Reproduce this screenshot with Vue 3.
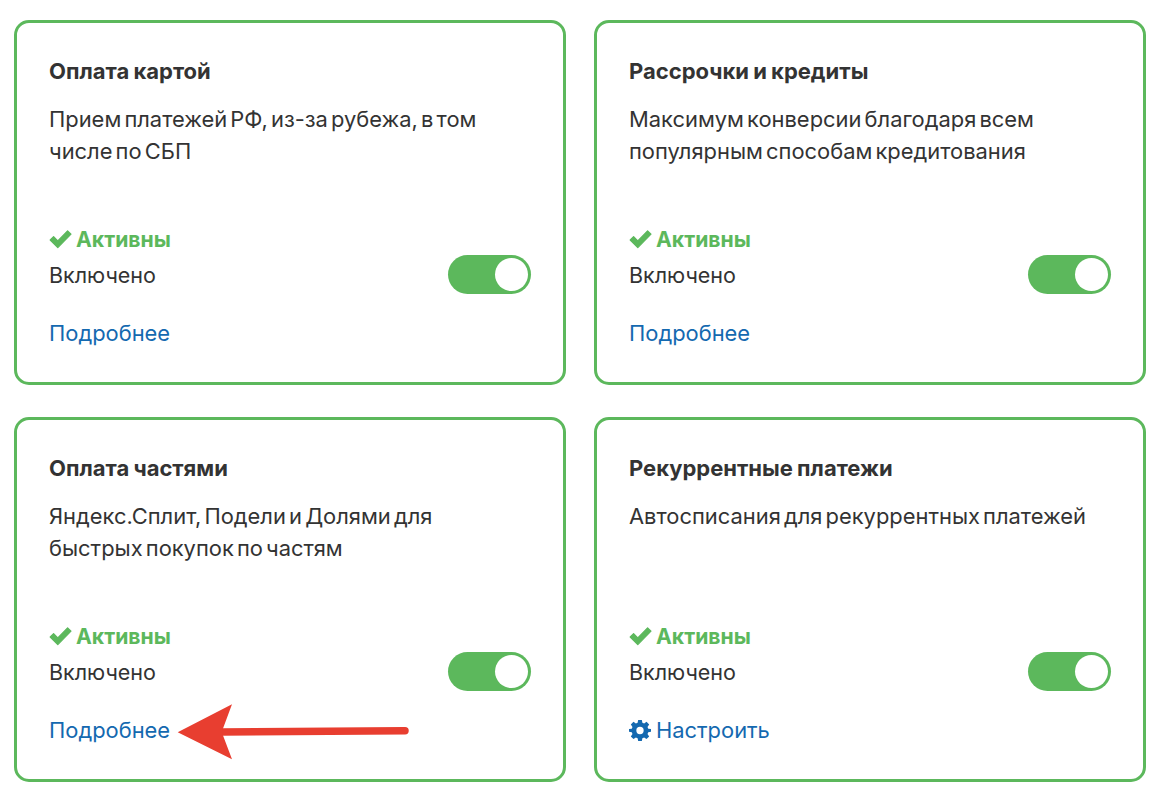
<script setup>
const cards = [
  { title: 'Оплата картой', lines: ['Прием платежей РФ, из-за рубежа, в том', 'числе по СБП'], link: 'Подробнее' },
  { title: 'Рассрочки и кредиты', lines: ['Максимум конверсии благодаря всем', 'популярным способам кредитования'], link: 'Подробнее' },
  { title: 'Оплата частями', lines: ['Яндекс.Сплит, Подели и Долями для', 'быстрых покупок по частям'], link: 'Подробнее', arrow: true },
  { title: 'Рекуррентные платежи', lines: ['Автосписания для рекуррентных платежей'], link: 'Настроить', gear: true },
]
</script>

<template>
  <div class="page">
    <section v-for="c in cards" :key="c.title" class="card">
      <h3 class="title">{{ c.title }}</h3>
      <p class="desc"><span v-for="l in c.lines" :key="l" class="line">{{ l }}</span></p>
      <div class="status">
        <svg class="check" viewBox="0 0 23 20" width="23" height="20"><path d="M1.200 11 4.600 7.600 8.800 11.800 18.600 1.800 22 5.200 8.800 18.600z" fill="#5cb85c" stroke="#5cb85c" stroke-width="1.200" stroke-linejoin="round"/></svg>
        <span>Активны</span>
      </div>
      <div class="row">
        <span class="label">Включено</span>
        <span class="toggle"><span class="knob"></span></span>
      </div>
      <a class="link">
        <svg v-if="c.gear" class="gear" viewBox="0 0 24 24" width="22" height="22"><path fill="#1469b0" fill-rule="evenodd" d="M10 1h4l.6 3.100 1.900.8L19.100 3.100 22 6l-1.800 2.600.8 1.900L24 11v3l-3 .5-.8 1.900 1.800 2.600-2.900 2.900-2.600-1.800-1.900.8L14 24h-4l-.6-3.100-1.900-.8L4.900 21.900 2 19l1.800-2.600-.8-1.900L0 14v-3l3-.5.8-1.900L2 6l2.900-2.900 2.600 1.800 1.900-.8zM12 8.500a4 4 0 1 0 0 8 4 4 0 0 0 0-8z"/></svg>
        {{ c.link }}
      </a>
      <svg v-if="c.arrow" class="arrow" viewBox="0 0 236 60" width="236" height="60">
        <path d="M44 30 228 28.700" stroke="#e83e30" stroke-width="7.500" stroke-linecap="round" fill="none"/>
        <path d="M.7 30.300 55 2.300 44.700 30 55 57.300z" fill="#e83e30"/>
      </svg>
    </section>
  </div>
</template>

<style>
html, body { margin: 0; background: #fff; }
</style>

<style scoped>
.page {
  display: grid;
  grid-template-columns: 552px 552px;
  grid-auto-rows: 365px;
  column-gap: 28px;
  row-gap: 32px;
  padding: 20px 0 0 14px;
  width: 1165px;
  height: 797px;
  box-sizing: border-box;
  font-family: Inter, "Noto Sans", sans-serif;
  color: #333;
  font-size: 21.9px;
  word-spacing: -3px;
}
.card {
  position: relative;
  box-sizing: border-box;
  border: 3px solid #5cb85c;
  border-radius: 15px;
  padding: 32px 32px 0;
  display: flex;
  flex-direction: column;
}
.title { margin: 0; font-size: 22px; line-height: 32px; font-weight: 700; word-spacing: -1px; }
.desc { margin: 16px 0 0; height: 116.5px; line-height: 32px; }
.line { display: block; white-space: nowrap; }
.status {
  display: flex; align-items: center; gap: 4px;
  color: #5cb85c; font-weight: 700; font-size: 21.2px; line-height: 31px;
  margin-top: 4px;
}
.row { display: flex; align-items: center; justify-content: space-between; height: 40px; }
.label { font-size: 21.5px; }
.toggle {
  box-sizing: border-box; width: 83px; height: 39px; border-radius: 20px;
  background: #5cb85c; display: flex; justify-content: flex-end; align-items: center; padding-right: 3px;
}
.knob { width: 33px; height: 33px; border-radius: 50%; background: #fff; }
.link {
  display: flex; align-items: center; gap: 5px;
  color: #1469b0; line-height: 32px; margin-top: 22.500px;
}
.arrow { position: absolute; left: 160px; top: 282px; }
</style>
